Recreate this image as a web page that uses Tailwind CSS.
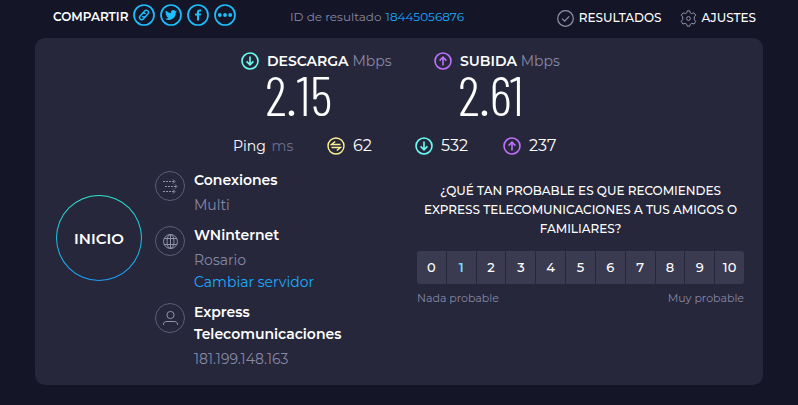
<!DOCTYPE html>
<html lang="es">
<head>
    <meta charset="UTF-8">
    <meta name="viewport" content="width=device-width, initial-scale=1.0">
    <title>Resultado de la prueba</title>
    <script src="https://cdn.jsdelivr.net/npm/@tailwindcss/browser@4"></script>
</head>
<body class="min-h-screen bg-[#141526] px-[35px] pb-5 font-[Montserrat,Inter,sans-serif] text-white">

    <!-- Shared icons -->
    <svg class="hidden">
        <symbol id="icon-down" viewBox="0 0 18 18" fill="none" stroke="currentColor" stroke-width="1.6">
            <circle cx="9" cy="9" r="8" />
            <path d="M9 4.5v8.2M5.6 9.4 9 12.8l3.4-3.4" />
        </symbol>
        <symbol id="icon-up" viewBox="0 0 18 18" fill="none" stroke="currentColor" stroke-width="1.6">
            <circle cx="9" cy="9" r="8" />
            <path d="M9 13.5V5.3M5.6 8.6 9 5.2l3.4 3.4" />
        </symbol>
        <symbol id="icon-ping" viewBox="0 0 18 18" fill="none" stroke="currentColor" stroke-width="1.4">
            <circle cx="9" cy="9" r="8" />
            <path d="M13.5 7.5h-9l3.7-3M4.5 10.5h9l-3.7 3" />
        </symbol>
    </svg>

    <header class="flex h-[38px] pr-[7px] pl-[18px]">
        <div class="flex h-8 items-center text-xs font-semibold">
            <span class="mr-1 w-[76px] pt-0.5 whitespace-nowrap">COMPARTIR</span>
            <div class="mb-0.5 flex gap-[5px] text-[#1cbfff]">
                <button aria-label="Copiar enlace">
                    <svg class="size-[22px]" viewBox="0 0 22 22" fill="none" stroke="currentColor" stroke-width="1.7">
                        <circle cx="11" cy="11" r="10" />
                        <g transform="rotate(-48 11 11)" stroke-width="1.4">
                            <path d="M11.5 13.2H7.6a2.2 2.2 0 0 1 0-4.4h3.2a2.2 2.2 0 0 1 2.1 2.8" />
                            <path d="M10.5 8.8h3.9a2.2 2.2 0 0 1 0 4.4h-3.2a2.2 2.2 0 0 1-2.1-2.8" />
                        </g>
                    </svg>
                </button>
                <button aria-label="Twitter">
                    <svg class="size-[22px]" viewBox="0 0 22 22" fill="none">
                        <circle cx="11" cy="11" r="10" stroke="currentColor" stroke-width="1.7" />
                        <path transform="translate(5 5) scale(.5)" fill="currentColor" d="M23.9 4.6a10 10 0 0 1-2.8.8 5 5 0 0 0 2.2-2.8c-1 .6-2 1-3.1 1.2a4.9 4.9 0 0 0-8.4 4.5A14 14 0 0 1 1.7 3.2a4.9 4.9 0 0 0 1.5 6.6 4.9 4.9 0 0 1-2.2-.6v.1a4.9 4.9 0 0 0 3.9 4.8 5 5 0 0 1-2.2.1 4.9 4.9 0 0 0 4.6 3.4A9.9 9.9 0 0 1 0 19.5a14 14 0 0 0 21.5-12.4 10 10 0 0 0 2.4-2.5z" />
                    </svg>
                </button>
                <button aria-label="Facebook">
                    <svg class="size-[22px]" viewBox="0 0 22 22" fill="none">
                        <circle cx="11" cy="11" r="10" stroke="currentColor" stroke-width="1.7" />
                        <path fill="currentColor" d="M10 16.5v-5H8V9.6h2V8.2C10 6.4 11 5.5 12.6 5.5H14v1.9h-1c-.8 0-1 .4-1 1v1.2h2l-.3 1.9H12v5z" />
                    </svg>
                </button>
                <button aria-label="Más opciones">
                    <svg class="size-[22px]" viewBox="0 0 22 22" fill="currentColor">
                        <circle cx="11" cy="11" r="10" fill="none" stroke="currentColor" stroke-width="1.7" />
                        <circle cx="5.8" cy="11" r="1.9" />
                        <circle cx="11" cy="11" r="1.9" />
                        <circle cx="16.2" cy="11" r="1.9" />
                    </svg>
                </button>
            </div>
        </div>

        <p class="ml-[54px] flex h-[34px] items-center gap-1 text-xs whitespace-nowrap text-[#8788a5]">ID de resultado <a href="#" class="text-[#1cabff]">18445056876</a></p>

        <nav class="ml-auto flex h-9 items-center gap-[18px] text-xs font-medium text-white">
            <a href="#" class="flex items-center gap-[5px]">
                <svg class="size-[17px] text-[#9193a8]" viewBox="0 0 17 17" fill="none" stroke="currentColor" stroke-width="1.2">
                    <circle cx="8.5" cy="8.5" r="7.8" />
                    <path d="m5.2 8.7 2.4 2.4 4.6-4.7" />
                </svg>
                RESULTADOS
            </a>
            <a href="#" class="flex items-center gap-[5px]">
                <svg class="size-[17px] text-[#9193a8]" viewBox="0 0 17 17" fill="none" stroke="currentColor" stroke-linejoin="round">
                    <circle cx="8.5" cy="8.5" r="1.9" />
                    <path d="M7.3.8h2.4l.5 2 1.400.8 2.200-.8 1.900 2.300-1.400 1.800v2.700l1.400 1.800-1.600 2.600-2.300-.6-1.400.8-.7 2H7.300l-.7-2-1.400-.8-2.300.6-1.600-2.600 1.400-1.800V6.900L1.300 5.100l1.900-2.300 2.200.8 1.400-.8z" />
                </svg>
                AJUSTES
            </a>
        </nav>
    </header>

    <main class="rounded-[10px] bg-[#26273b] pt-3 pr-[19px] pb-[15px] pl-[21px]">
        <!-- Speeds -->
        <section class="flex gap-[43px] pl-[185px]">
            <div class="w-[150px]">
                <h2 class="flex items-center gap-2 text-sm leading-[22px] font-semibold whitespace-nowrap">
                    <svg class="size-[18px] shrink-0 text-[#6afff3]"><use href="#icon-down" /></svg>
                    <span>DESCARGA <span class="font-normal text-[#8788a5]">Mbps</span></span>
                </h2>
                <p class="pl-6 font-['Barlow_Condensed','Roboto_Condensed',Roboto,sans-serif] text-[55px] leading-[44px] font-light">2.15</p>
            </div>
            <div class="w-[150px]">
                <h2 class="flex items-center gap-2 text-sm leading-[22px] font-semibold whitespace-nowrap">
                    <svg class="size-[18px] shrink-0 text-[#bf71ff]"><use href="#icon-up" /></svg>
                    <span>SUBIDA <span class="font-normal text-[#8788a5]">Mbps</span></span>
                </h2>
                <p class="pl-6 font-['Barlow_Condensed','Roboto_Condensed',Roboto,sans-serif] text-[55px] leading-[44px] font-light">2.61</p>
            </div>
        </section>

        <!-- Latency -->
        <section class="mt-[18px] flex items-center pl-[177px] text-base leading-6">
            <p class="w-[94px] text-sm">Ping <span class="ml-0.5 text-[#6c6e90]">ms</span></p>
            <p class="flex w-[88px] items-center gap-2"><svg class="size-[18px] text-[#fff38e]"><use href="#icon-ping" /></svg>62</p>
            <p class="flex w-[88px] items-center gap-2"><svg class="size-[18px] text-[#6afff3]"><use href="#icon-down" /></svg>532</p>
            <p class="flex items-center gap-2"><svg class="size-[18px] text-[#bf71ff]"><use href="#icon-up" /></svg>237</p>
        </section>

        <div class="mt-[11px] flex">
            <button class="mt-[26px] size-[86px] shrink-0 rounded-full bg-linear-to-b from-[#2fe6cc] to-[#1c9df5] p-px">
                <span class="flex size-full items-center justify-center rounded-full bg-[#26273b] pt-0.5 text-[15px] font-semibold">INICIO</span>
            </button>

            <!-- Connection details -->
            <section class="ml-[13px] flex w-[195px] shrink-0 flex-col gap-2 text-sm leading-[22px]">
                <div class="flex gap-[9px]">
                    <svg class="mt-0.5 size-[30px] shrink-0 text-[#9193a8]" viewBox="0 0 30 30" fill="none" stroke="currentColor">
                        <circle cx="15" cy="15" r="14.5" stroke="#5d5e75" />
                        <path stroke-dasharray="2 1" d="M8 10.5h11M10 15.5h11M8 20.5h11" />
                        <path d="m18 8.5 2 2-2 2M20 13.5l2 2-2 2M18 18.5l2 2-2 2" />
                    </svg>
                    <div>
                        <h3 class="font-semibold">Conexiones</h3>
                        <p class="mt-[3px] text-[#8788a5]">Multi</p>
                    </div>
                </div>
                <div class="flex gap-[9px]">
                    <svg class="mt-0.5 size-[30px] shrink-0 text-[#9193a8]" viewBox="0 0 30 30" fill="none" stroke="currentColor">
                        <circle cx="15" cy="15" r="14.5" stroke="#5d5e75" />
                        <circle cx="15.5" cy="15.5" r="7" />
                        <ellipse cx="15.5" cy="15.5" rx="3.5" ry="7" />
                        <path d="M9.2 12.5h12.6M9.2 18.5h12.6M15.5 8.5v14" />
                    </svg>
                    <div>
                        <h3 class="font-semibold">WNinternet</h3>
                        <p class="mt-[3px] text-[#8788a5]">Rosario</p>
                        <a href="#" class="block text-[#1cabff]">Cambiar servidor</a>
                    </div>
                </div>
                <div class="flex gap-[9px]">
                    <svg class="mt-0.5 size-[30px] shrink-0 text-[#9193a8]" viewBox="0 0 30 30" fill="none" stroke="currentColor">
                        <circle cx="15" cy="15" r="14.5" stroke="#5d5e75" />
                        <circle cx="15.5" cy="12" r="3.6" />
                        <path d="M8.5 22v-1c0-1.8 2-2.5 3.5-2.5h7c1.5 0 3.5.7 3.5 2.5v1" />
                    </svg>
                    <div>
                        <h3 class="font-semibold">Express<br>Telecomunicaciones</h3>
                        <p class="mt-[3px] text-[#8788a5]">181.199.148.163</p>
                    </div>
                </div>
            </section>

            <!-- Survey -->
            <section class="ml-auto min-w-0 flex-1 pt-3 pl-[67px]">
                <h3 id="survey-question" class="text-center text-xs leading-[19px] font-medium whitespace-nowrap">¿QUÉ TAN PROBABLE ES QUE RECOMIENDES<br>EXPRESS TELECOMUNICACIONES A TUS AMIGOS O<br>FAMILIARES?</h3>
                <div role="group" aria-labelledby="survey-question" class="mt-[13px] grid grid-cols-11 gap-px overflow-hidden rounded-[3px] text-[13px] font-medium">
                    <button class="h-[33px] bg-[#3a3b50]">0</button>
                    <button class="h-[33px] bg-[#3a3b50] font-semibold text-[#6fdcff]">1</button>
                    <button class="h-[33px] bg-[#3a3b50]">2</button>
                    <button class="h-[33px] bg-[#3a3b50]">3</button>
                    <button class="h-[33px] bg-[#3a3b50]">4</button>
                    <button class="h-[33px] bg-[#3a3b50]">5</button>
                    <button class="h-[33px] bg-[#3a3b50]">6</button>
                    <button class="h-[33px] bg-[#3a3b50]">7</button>
                    <button class="h-[33px] bg-[#3a3b50]">8</button>
                    <button class="h-[33px] bg-[#3a3b50]">9</button>
                    <button class="h-[33px] bg-[#3a3b50]">10</button>
                </div>
                <div class="mt-[5px] flex justify-between text-[11px] leading-[18px] text-[#8788a5]">
                    <span>Nada probable</span>
                    <span>Muy probable</span>
                </div>
            </section>
        </div>
    </main>
</body>
</html>
